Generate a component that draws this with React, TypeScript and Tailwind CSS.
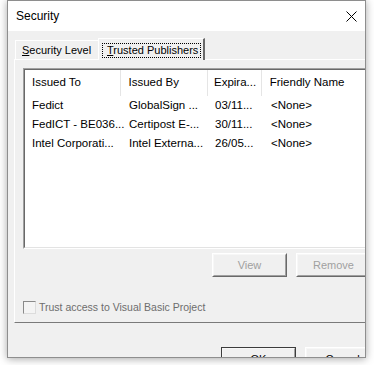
const rows = [
  ["Fedict", "GlobalSign ...", "03/11...", "<None>"],
  ["FedICT - BE036...", "Certipost E-...", "30/11...", "<None>"],
  ["Intel Corporati...", "Intel Externa...", "26/05...", "<None>"],
];

const cols = [
  { w: "w-[97px]", pad: "pl-[7px]", label: "Issued To" },
  { w: "w-[87px]", pad: "pl-[7px]", label: "Issued By" },
  { w: "w-[54px]", pad: "pl-[6px]", label: "Expira..." },
  { w: "w-[120px]", pad: "pl-[8px]", label: "Friendly Name" },
];

const Button = ({ label, disabled, def }: { label: string; disabled?: boolean; def?: boolean }) => (
  <div
    className={`w-[75px] h-[24px] shrink-0 border ${
      def ? "border-[#3c3c3c]" : "border-t-white border-l-white border-b-[#696969] border-r-[#696969]"
    }`}
  >
    <div className="h-full border border-t-[#f7f7f7] border-l-[#f7f7f7] border-b-[#a0a0a0] border-r-[#a0a0a0] flex items-center justify-center">
      <span className={`text-[11px] ${disabled ? "text-[#a0a0a0]" : "text-black"}`}>{label}</span>
    </div>
  </div>
);

export default function App() {
  return (
    <div className="w-[374px] h-[365px] bg-white overflow-hidden font-['Liberation_Sans',Arial,sans-serif]">
      <div className="ml-[7px] w-[359px] h-[358px] border border-[#8e8e8e] bg-[#f0f0f0] shadow-[0_1px_8px_rgba(0,0,0,0.35)] overflow-hidden flex flex-col">
        {/* title bar */}
        <div className="h-[30px] shrink-0 bg-white flex items-center justify-between pl-[8px] pr-[8px]">
          <span className="text-[12px] text-black">Security</span>
          <svg width="11" height="11" viewBox="0 0 11 11">
            <path d="M0.5 0.5L10.5 10.5M10.5 0.5L0.5 10.5" stroke="#000" strokeWidth="1" />
          </svg>
        </div>

        {/* body */}
        <div className="pt-[7px] shrink-0">
          {/* tabs */}
          <div className="ml-[7px] h-[21px] flex items-end text-[11px] text-black">
            <div className="w-[83px] h-[19px] border-t border-l border-white pl-[6px] pt-[3px] leading-[13px] whitespace-nowrap">
              <span className="underline underline-offset-[1px]">S</span>ecurity Level
            </div>
            <div className="relative z-10 w-[107px] h-[22px] -mb-[1px] bg-[#f0f0f0] border-t border-l border-white border-r-2 border-r-[#696969] pl-[3px] pt-[4px]">
              <div className="w-[99px] h-[15px] border border-dotted border-black pl-[4px] leading-[13px] whitespace-nowrap">
                <span className="underline underline-offset-[1px]">T</span>rusted Publishers
              </div>
            </div>
          </div>

          {/* tab panel */}
          <div className="ml-[6px] w-[400px] h-[264px] border-t border-l border-white border-b border-b-[#7a7a7a] pl-[8px] pt-[8px]">
            {/* list view */}
            <div className="w-[360px] h-[181px] border border-t-[#a0a0a0] border-l-[#a0a0a0] border-b-white border-r-white">
              <div className="h-full bg-white border border-t-[#696969] border-l-[#696969] border-b-[#e3e3e3] border-r-[#e3e3e3] text-[11.5px] text-black">
                <div className="h-[26px] flex">
                  {cols.map((c) => (
                    <div key={c.label} className={`${c.w} ${c.pad} h-full flex items-center border-r border-[#e5e5e5] whitespace-nowrap overflow-hidden`}>
                      {c.label}
                    </div>
                  ))}
                </div>
                {rows.map((r) => (
                  <div key={r[0]} className="h-[19px] flex">
                    {r.map((v, i) => (
                      <div key={i} className={`${cols[i].w} ${cols[i].pad} shrink-0 flex items-center whitespace-nowrap`}>
                        {v}
                      </div>
                    ))}
                  </div>
                ))}
              </div>
            </div>

            {/* buttons */}
            <div className="mt-[4px] ml-[189px] flex gap-[9px]">
              <Button label="View" disabled />
              <Button label="Remove" disabled />
            </div>

            {/* checkbox */}
            <div className="mt-[24px] flex items-center gap-[3px]">
              <div className="w-[13px] h-[13px] border border-t-[#8a8a8a] border-l-[#8a8a8a] border-b-[#dcdcdc] border-r-[#dcdcdc] bg-[#f4f4f4]" />
              <span className="text-[10.5px] text-[#6d6d6d] leading-[13px]">Trust access to Visual Basic Project</span>
            </div>
          </div>

          {/* dialog buttons */}
          <div className="mt-[24px] ml-[213px] flex gap-[9px]">
            <Button label="OK" def />
            <Button label="Cancel" />
          </div>
        </div>
      </div>
    </div>
  );
}
